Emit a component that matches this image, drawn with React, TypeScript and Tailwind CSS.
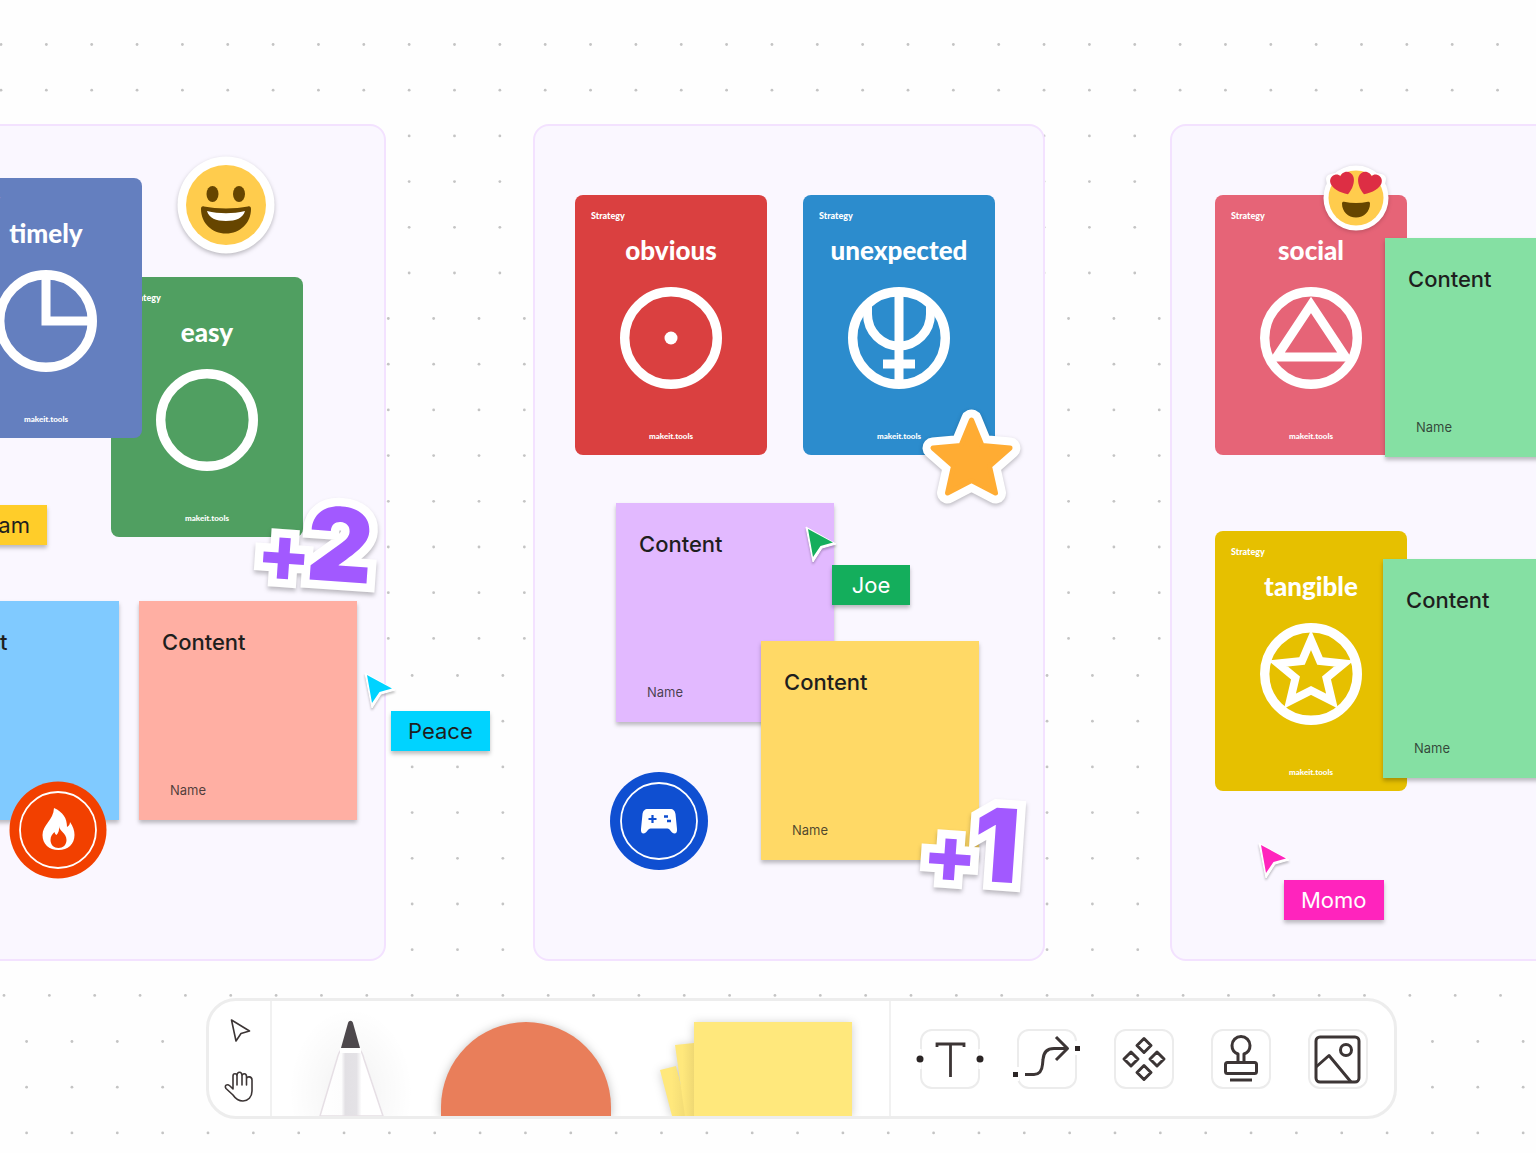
import type { ReactNode } from "react";

// The dot grid is tiled in bands, each with its own horizontal phase.
const DOT_BANDS = [
  { x: 1, y: 44, rows: 6 },
  { x: 25.5, y: 318, rows: 8 },
  { x: 4, y: 675, rows: 8 },
  { x: 26.6, y: 1041, rows: 6 },
];
const DOT_PITCH = 45.35;
const ROW_PITCH = 45.7;

function DotGrid() {
  return (
    <svg className="absolute inset-0 h-full w-full" aria-hidden="true">
      {DOT_BANDS.map((band) =>
        Array.from({ length: band.rows * 60 }, (_, i) => (
          <circle
            key={`${band.y}-${i}`}
            cx={band.x + (i % 60) * DOT_PITCH}
            cy={band.y + Math.floor(i / 60) * ROW_PITCH + 0.5}
            r="1.4"
            fill="#c4c4c4"
          />
        )),
      )}
    </svg>
  );
}

function Frame({ className, children }: { className: string; children: ReactNode }) {
  return (
    <section
      className={`relative flex h-[837px] w-[512px] shrink-0 flex-col rounded-2xl border-2 border-[#f3e2ff] bg-[#faf7ff] ${className}`}
    >
      {children}
    </section>
  );
}

function StrategyCard({
  title,
  className,
  children,
}: {
  title: string;
  className: string;
  children?: ReactNode;
}) {
  return (
    <article
      className={`flex h-[260px] w-48 shrink-0 flex-col items-center rounded-lg pt-[13px] font-['Lato',sans-serif] text-white ${className}`}
    >
      <p className="self-start pl-4 text-[9px] leading-4 font-black">Strategy</p>
      <h2 className="mt-[10px] text-[26px] leading-8 font-black">{title}</h2>
      <svg
        viewBox="0 0 102 102"
        className="mt-[21px] h-[102px] w-[102px]"
        fill="none"
        stroke="currentColor"
        strokeWidth="9"
        aria-hidden="true"
      >
        <circle cx="51" cy="51" r="46.3" strokeWidth="9.4" />
        {children}
      </svg>
      <p className="mt-[39px] text-[8px] leading-4 font-black">makeit.tools</p>
    </article>
  );
}

function StickyNote({ className }: { className: string }) {
  return (
    <article
      className={`flex h-[219px] w-[218px] shrink-0 flex-col justify-between pt-[27px] pb-5 shadow-[0_3px_4px_rgba(0,0,0,0.25)] ${className}`}
    >
      <p className="pl-[23px] text-[22px] leading-7 font-medium text-[#1e1e1e]">Content</p>
      <p className="pl-[31px] text-[13px] leading-5 text-[#1e1e1e]/80">Name</p>
    </article>
  );
}

function NameTag({ name, className }: { name: string; className: string }) {
  return (
    <span
      className={`absolute min-w-[78px] px-[17px] py-[6px] text-center text-[22px] leading-7 shadow-[0_3px_4px_rgba(0,0,0,0.25)] ${className}`}
    >
      {name}
    </span>
  );
}

function Pointer({ className }: { className: string }) {
  return (
    <svg
      viewBox="0 0 34 40"
      className={`absolute h-10 w-[34px] drop-shadow-[0_2px_1px_rgba(0,0,0,0.25)] ${className}`}
      aria-hidden="true"
    >
      <path d="M2 1 32 18 18 22 9 36Z" fill="#fff" stroke="#fff" strokeWidth="1" strokeLinejoin="round" />
      <path d="M4 3 29 16.500 16.500 20 9 31Z" fill="currentColor" />
    </svg>
  );
}

function VoteSticker({ digit, className }: { digit: string; className: string }) {
  return (
    <svg
      viewBox="0 0 124 96"
      className={`absolute h-24 w-[124px] overflow-visible font-['Inter',sans-serif] drop-shadow-[0_3px_2px_rgba(0,0,0,0.25)] ${className}`}
      fill="#a259ff"
      role="img"
      aria-label={`+${digit}`}
    >
      <g transform="rotate(4 62 48)">
        <g stroke="#fff" strokeWidth="17">
          <text x="3" y="84" fontSize="80" fontWeight="800">+</text>
          <text x="53" y="80" fontSize="102" fontWeight="900">{digit}</text>
        </g>
        <text x="3" y="84" fontSize="80" fontWeight="800">+</text>
        <text x="53" y="80" fontSize="102" fontWeight="900">{digit}</text>
      </g>
    </svg>
  );
}

function SmileSticker() {
  return (
    <svg
      viewBox="0 0 98 98"
      className="absolute top-[156px] left-[177px] h-[98px] w-[98px] overflow-visible drop-shadow-[0_2px_2px_rgba(0,0,0,0.25)]"
      aria-hidden="true"
    >
      <circle cx="49" cy="49" r="48.500" fill="#fff" />
      <circle cx="49" cy="49" r="40" fill="#ffcc4d" />
      <ellipse cx="35.500" cy="38" rx="6" ry="8" fill="#664500" />
      <ellipse cx="62" cy="38" rx="6" ry="8" fill="#664500" />
      <path d="M24 53c0-2 1-3 3-2.500 13 2.500 31 2.500 44 0 2-.5 3 .5 3 2.500 0 14-11 24.500-25 24.500S24 67 24 53Z" fill="#664500" />
      <path d="M30 55c12 3 26 3 38 0-2 7-9 10-19 10s-17-3-19-10Z" fill="#fff" />
    </svg>
  );
}

function HeartEyesSticker() {
  return (
    <svg
      viewBox="0 0 66 66"
      className="absolute top-[165px] left-[1323px] h-[66px] w-[66px] overflow-visible drop-shadow-[0_1px_2px_rgba(0,0,0,0.2)]"
      aria-hidden="true"
    >
      <g fill="#fff" stroke="#fff" strokeWidth="10" strokeLinejoin="round">
        <circle cx="33" cy="33" r="27.500" />
        <path d="M29 9 8 14 10 24 25 29ZM37 9 58 14 56 24 41 29Z" />
      </g>
      <circle cx="33" cy="33" r="27.500" fill="#ffcc4d" />
      <path
        d="M30.500 12c-1.300-3.800-5-6-8.500-5-2.300.7-3.800 2-4.500 4.200-1.500-1.500-3.500-2.200-5.500-1.500-3.900 1.200-5.700 4.800-4.500 8.500 1.500 5 9 9.500 17.500 11 4.500-5 7-12.200 5.500-17.200Z"
        fill="#dd2e44"
      />
      <path
        d="M35.500 12c1.300-3.800 5-6 8.500-5 2.300.7 3.800 2 4.500 4.200 1.500-1.500 3.500-2.200 5.500-1.500 3.900 1.200 5.700 4.800 4.500 8.500-1.500 5-9 9.500-17.500 11-4.500-5-7-12.200-5.500-17.200Z"
        fill="#dd2e44"
      />
      <path d="M19 38.500c0-1.500 1-2 2-1.800 8 1.600 16 1.600 24 0 1-.2 2 .3 2 1.800 0 8-6 14-14 14s-14-6-14-14Z" fill="#664500" />
    </svg>
  );
}

const STAR = "M48.500 12 59 37.500 87 40 66.500 58 72.500 85 48.500 72.500 24.500 85 30.500 58 10 40 38 37.500Z";

function StarSticker() {
  return (
    <svg
      viewBox="0 0 97 97"
      className="absolute top-[408px] left-[923px] h-[97px] w-[97px] overflow-visible drop-shadow-[0_2px_2px_rgba(0,0,0,0.25)]"
      strokeLinejoin="round"
      aria-hidden="true"
    >
      <path d={STAR} fill="#fff" stroke="#fff" strokeWidth="21" />
      <path d={STAR} fill="#ffac33" stroke="#ffac33" strokeWidth="5" />
    </svg>
  );
}

function FireBadge() {
  return (
    <svg viewBox="0 0 98 98" className="absolute top-[781px] left-[9px] h-[98px] w-[98px]" aria-hidden="true">
      <circle cx="49" cy="49" r="48.500" fill="#f24000" />
      <circle cx="49" cy="49" r="38" fill="none" stroke="#fff" strokeWidth="1.800" />
      <path
        d="M45 27c9 4 13 10 13 19 2-1 3-3 3-5 3 4 4.500 9 4.500 13C65.500 63 59 69 49.500 69S33.500 63 33.500 54c0-10 11-15 11.500-27Z"
        fill="#fff"
      />
      <path d="M50 45c0 5 7.500 7 7.500 14 0 5-3.500 8-8 8s-8-3-8-8c0-4 2-6 4-8 .5 2 1 2.500 2 3 2-2 3-5 2.500-9Z" fill="#f24000" />
    </svg>
  );
}

function GameBadge() {
  return (
    <svg viewBox="0 0 98 98" className="absolute top-[772px] left-[610px] h-[98px] w-[98px]" aria-hidden="true">
      <circle cx="49" cy="49" r="49" fill="#0f4fd1" />
      <circle cx="49" cy="49" r="38" fill="none" stroke="#fff" strokeWidth="1.800" />
      <path
        d="M38 37h22c3.500 0 5 2 5.500 5l1.500 15c.3 3-.8 4.500-2.500 4.500-3 0-4.500-5-7-5h-17c-2.500 0-4 5-7 5-1.700 0-2.800-1.500-2.500-4.500L32.500 42c.5-3 2-5 5.500-5Z"
        fill="#fff"
      />
      <path d="M42.500 43v8M38.500 47h8" stroke="#0f4fd1" strokeWidth="2.200" />
      <path d="M54 44.500h4M57 49h4" stroke="#0f4fd1" strokeWidth="2.600" />
    </svg>
  );
}

function ToolButton({ label, children }: { label: string; children: ReactNode }) {
  return (
    <button
      type="button"
      aria-label={label}
      className="h-[60px] w-[60px] shrink-0 rounded-xl border-2 border-[#ececec] bg-white"
    >
      <svg
        viewBox="0 0 60 60"
        className="-m-[2px] h-[60px] w-[60px] overflow-visible"
        fill="none"
        stroke="#3c3535"
        strokeWidth="3"
        strokeLinejoin="round"
      >
        {children}
      </svg>
    </button>
  );
}

function Toolbar() {
  return (
    <nav
      aria-label="Tools"
      className="relative mr-[139px] mb-[34px] ml-[206px] flex h-[121px] overflow-hidden rounded-[30px] border-[3px] border-[#ededed] bg-white"
    >
      <div className="flex w-[63px] shrink-0 flex-col items-center justify-center gap-[22px] border-r-2 border-[#f1f1f1]">
        <button type="button" aria-label="Select">
          <svg viewBox="0 0 32 32" className="h-8 w-8" fill="none" stroke="#3c3535" strokeWidth="1.600" strokeLinejoin="round">
            <path d="M7.500 5 25.500 16 17 18.500 12 26Z" />
          </svg>
        </button>
        <button type="button" aria-label="Hand">
          <svg
            viewBox="0 0 32 34"
            className="h-[34px] w-8"
            fill="none"
            stroke="#3c3535"
            strokeWidth="1.600"
            strokeLinecap="round"
            strokeLinejoin="round"
          >
            <path d="M9 20V7c0-3 4-3 4 0 0-5 5-5 5 0 0-3 4.500-3 4.500.5 0 0 0 1.500 0 2.500 0-3 5.500-3 5.500 1v11c0 6-4 10-9 10-5.500 0-8-3-10-6L2 19.500c-2-3 1-5 4-2.500l3 3M13 7v9M18 7v9M22.500 9v7" />
          </svg>
        </button>
      </div>
      <div className="flex flex-1 items-end justify-between pr-[37px] pl-12">
        <button type="button" aria-label="Marker">
          <svg viewBox="0 0 64 96" className="block h-24 w-16 overflow-visible">
            <defs>
              <linearGradient id="barrel">
                <stop offset="0" stopColor="#fff" />
                <stop offset="0.340" stopColor="#fdfdfd" />
                <stop offset="0.400" stopColor="#e2e0e4" />
                <stop offset="0.580" stopColor="#e4e2e6" />
                <stop offset="0.660" stopColor="#fff" />
                <stop offset="1" stopColor="#fff" />
              </linearGradient>
              <radialGradient id="penGlow">
                <stop offset="0" stopColor="#000" stopOpacity="0.060" />
                <stop offset="0.500" stopColor="#000" stopOpacity="0.025" />
                <stop offset="1" stopColor="#000" stopOpacity="0" />
              </radialGradient>
            </defs>
            <ellipse cx="31" cy="72" rx="62" ry="84" fill="url(#penGlow)" />
            <path d="M21 30h19c2 2 3 5 4 9l19 57H0l17-57c1-4 2-7 4-9Z" fill="url(#barrel)" stroke="#e6dfe5" strokeWidth="1.500" />
            <path d="M20 28h21v5H20z" fill="#fff" />
            <path d="M28 3c1-3 4-3 5 0l7 25H21Z" fill="#4d484c" />
          </svg>
        </button>
        <button type="button" aria-label="Shapes" className="-ml-1">
          <svg viewBox="0 0 170 94" className="block h-[94px] w-[170px] overflow-visible drop-shadow-[0_1px_5px_rgba(0,0,0,0.25)]">
            <path d="M0 94v-9a85 85 0 0 1 170 0v9Z" fill="#e97e5a" />
          </svg>
        </button>
        <button type="button" aria-label="Sticky notes" className="-ml-3">
          <svg viewBox="0 0 192 94" className="block h-[94px] w-48 overflow-visible drop-shadow-[0_1px_5px_rgba(0,0,0,0.200)]">
            <defs>
              <linearGradient id="fold">
                <stop offset="0" stopColor="#ffe87c" />
                <stop offset="0.400" stopColor="#ffe87c" />
                <stop offset="1" stopColor="#efd874" />
              </linearGradient>
            </defs>
            <path d="M0 48 16 44 29 94H12Z" fill="url(#fold)" />
            <path d="M15 23 34 21v73H25Z" fill="url(#fold)" />
            <path d="M34 0h158v94H34z" fill="#ffe87c" />
          </svg>
        </button>
      </div>
      <div className="flex w-[505px] shrink-0 items-center gap-[37px] border-l-2 border-[#f1f1f1] pl-[29px]">
        <ToolButton label="Text">
          <path d="M17 18v-3h27v3M30.500 15v33" strokeLinejoin="miter" strokeWidth="2.800" />
          <path d="M0 20v20M60 20v20" stroke="#fff" />
          <circle cx="0" cy="30" r="3.500" fill="#2b2525" stroke="none" />
          <circle cx="60" cy="30" r="3.500" fill="#2b2525" stroke="none" />
        </ToolButton>
        <ToolButton label="Connector">
          <path d="M0 38v14M59 12v14" stroke="#fff" strokeWidth="4" />
          <path d="M8 45.500h9c6 0 8-4 8.500-10l.5-5c.5-7 4-11 11-11h13M39 8l11.500 11.500L39 31" />
          <path d="M-4 43h5v5h-5zM58 17h5v5h-5z" fill="#2b2525" stroke="none" />
        </ToolButton>
        <ToolButton label="Widgets">
          <path d="M30 9.500 37 16.500 30 23.500 23 16.500ZM30 36.500 37 43.500 30 50.500 23 43.500ZM17 23 24 30 17 37 10 30ZM43 23 50 30 43 37 36 30Z" />
        </ToolButton>
        <ToolButton label="Stamp">
          <path d="M27 33v-8c-4-1.500-6-4.500-6-8.500a9 9 0 0 1 18 0c0 4-2 7-6 8.500v8" />
          <rect x="14.500" y="33.500" width="31" height="11" rx="2" />
          <path d="M19 51h22" />
        </ToolButton>
        <ToolButton label="Image">
          <rect x="8" y="8" width="43" height="45" rx="4" />
          <circle cx="38" cy="21" r="5.500" />
          <path d="M8 38 21 26.500 43 53" />
        </ToolButton>
      </div>
    </nav>
  );
}

export default function App() {
  return (
    <div className="relative flex min-h-screen flex-col overflow-hidden bg-[#fefefe] font-['Inter',sans-serif]">
      <DotGrid />
      <main className="relative flex min-h-[998px] flex-1 items-start pt-[124px]">
        <Frame className="-ml-[126px]">
          <div className="h-[475px] shrink-0">
            <StrategyCard title="easy" className="absolute top-[151px] left-[235px] bg-[#509f61]" />
            <StrategyCard title="timely" className="absolute top-[52px] left-[74px] bg-[#647fbf]">
              <path d="M51 5v46h46" />
            </StrategyCard>
          </div>
          <div className="flex gap-5 pl-[25px]">
            <StickyNote className="bg-[#80caff]" />
            <StickyNote className="bg-[#ffafa3]" />
          </div>
        </Frame>

        <Frame className="ml-[147px] pt-[69px] pl-10">
          <div className="flex gap-9">
            <StrategyCard title="obvious" className="bg-[#da4040]">
              <circle cx="51" cy="51" r="6.500" fill="currentColor" stroke="none" />
            </StrategyCard>
            <StrategyCard title="unexpected" className="bg-[#2c8ccd]">
              <path d="M51 5v92M35 77h32" />
              <path d="M19.500 18v9a31.500 32 0 0 0 63 0v-9" />
            </StrategyCard>
          </div>
          <StickyNote className="mt-12 ml-[41px] bg-[#e2b9ff]" />
          <StickyNote className="-mt-[81px] ml-[186px] bg-[#ffd966]" />
        </Frame>

        <Frame className="ml-[125px] gap-[76px] pt-[69px] pl-[43px]">
          <div className="flex h-[260px] items-start">
            <StrategyCard title="social" className="bg-[#e66477]">
              <path d="M51 18 16.500 70h69Z" />
            </StrategyCard>
            <StickyNote className="-ml-[22px] mt-[43px] bg-[#85e0a3]" />
          </div>
          <div className="flex h-[260px] items-start">
            <StrategyCard title="tangible" className="bg-[#e6c000]">
              <path d="M51 17 60 38 84 40.500 66.500 55 72 78 51 67.500 30 78 35.500 55 18 40.500 42 38Z" strokeWidth="8" />
            </StrategyCard>
            <StickyNote className="-ml-6 mt-7 bg-[#85e0a3]" />
          </div>
        </Frame>

        <SmileSticker />
        <FireBadge />
        <VoteSticker digit="2" className="top-[500px] left-[254px]" />
        <StarSticker />
        <GameBadge />
        <VoteSticker digit="1" className="top-[801px] left-[920px]" />
        <HeartEyesSticker />

        <NameTag name="Team" className="top-[505px] right-[calc(100%-47px)] bg-[#ffcd29] text-[#1e1e1e]" />
        <Pointer className="top-[672px] left-[363px] text-[#00d3ff]" />
        <NameTag name="Peace" className="top-[711px] left-[391px] bg-[#00d3ff] text-[#1e1e1e]" />
        <Pointer className="top-[526px] left-[804px] text-[#14ae5c]" />
        <NameTag name="Joe" className="top-[565px] left-[832px] bg-[#14ae5c] text-white" />
        <Pointer className="top-[842px] left-[1257px] text-[#ff24bd]" />
        <NameTag name="Momo" className="top-[880px] left-[1284px] bg-[#ff24bd] text-white" />
      </main>
      <Toolbar />
    </div>
  );
}
